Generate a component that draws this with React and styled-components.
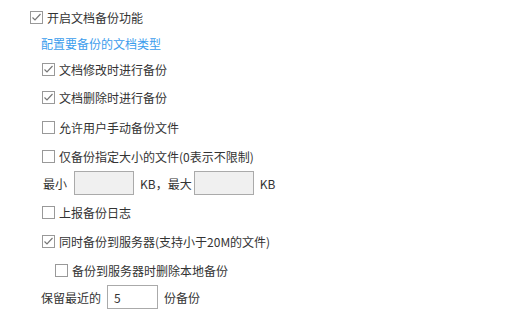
import React from "react";
import styled, { createGlobalStyle } from "styled-components";

const GlobalStyle = createGlobalStyle`
  body {
    margin: 0;
    background: #fff;
    font-family: "Noto Sans CJK SC", "Microsoft YaHei", sans-serif;
    font-size: 12px;
    color: #333;
  }
`;

const Page = styled.div`
  display: flex;
  flex-direction: column;
  padding: 5px 0 0 0;
  width: 527px;
  height: 314px;
`;

const Row = styled.div`
  display: flex;
  align-items: center;
  height: 24px;
  margin-top: ${(p) => p.$mt || 0}px;
  padding-left: ${(p) => p.$indent}px;
  gap: ${(p) => p.$gap ?? 4}px;
  white-space: nowrap;
`;

const Box = styled.span`
  display: inline-flex;
  align-items: center;
  justify-content: center;
  width: 11px;
  height: 11px;
  border: 1px solid #999;
  background: #fff;
  flex-shrink: 0;
`;

const LinkText = styled.span`
  color: #3c9ded;
`;

const Field = styled.div`
  width: ${(p) => p.$w}px;
  height: 24px;
  box-sizing: border-box;
  border: 1px solid #aaa;
  background: ${(p) => (p.$disabled ? "#f0f0f0" : "#fff")};
  padding-left: 6px;
  display: flex;
  align-items: center;
  margin-left: ${(p) => p.$ml ?? 5}px;
  margin-right: ${(p) => p.$mr ?? 5}px;
`;

function Check({ checked, label, indent, mt }) {
  return (
    <Row $indent={indent} $mt={mt}>
      <Box>
        {checked && (
          <svg width="11" height="11" viewBox="0 0 11 11">
            <polyline
              points="1.5,5.5 4,8 9.5,2"
              fill="none"
              stroke="#777"
              strokeWidth="1.2"
            />
          </svg>
        )}
      </Box>
      <span>{label}</span>
    </Row>
  );
}

export default function App() {
  return (
    <>
      <GlobalStyle />
      <Page>
        <Check checked indent={30} label="开启文档备份功能" />
        <Row $indent={41} $mt={2}>
          <LinkText>配置要备份的文档类型</LinkText>
        </Row>
        <Check checked indent={42} mt={2} label="文档修改时进行备份" />
        <Check checked indent={42} mt={4} label="文档删除时进行备份" />
        <Check indent={42} mt={6} label="允许用户手动备份文件" />
        <Check indent={42} mt={5} label="仅备份指定大小的文件(0表示不限制)" />
        <Row $indent={43} $mt={3} $gap={0}>
          <span>最小</span>
          <Field $w={60} $disabled $ml={7} $mr={6} />
          <span>KB，最大</span>
          <Field $w={60} $disabled $ml={2} $mr={6} />
          <span>KB</span>
        </Row>
        <Check indent={42} mt={5} label="上报备份日志" />
        <Check checked indent={42} mt={5} label="同时备份到服务器(支持小于20M的文件)" />
        <Check indent={55} mt={5} label="备份到服务器时删除本地备份" />
        <Row $indent={41} $mt={3} $gap={0}>
          <span>保留最近的</span>
          <Field $w={51} $ml={6} $mr={6}>5</Field>
          <span>份备份</span>
        </Row>
      </Page>
    </>
  );
}
